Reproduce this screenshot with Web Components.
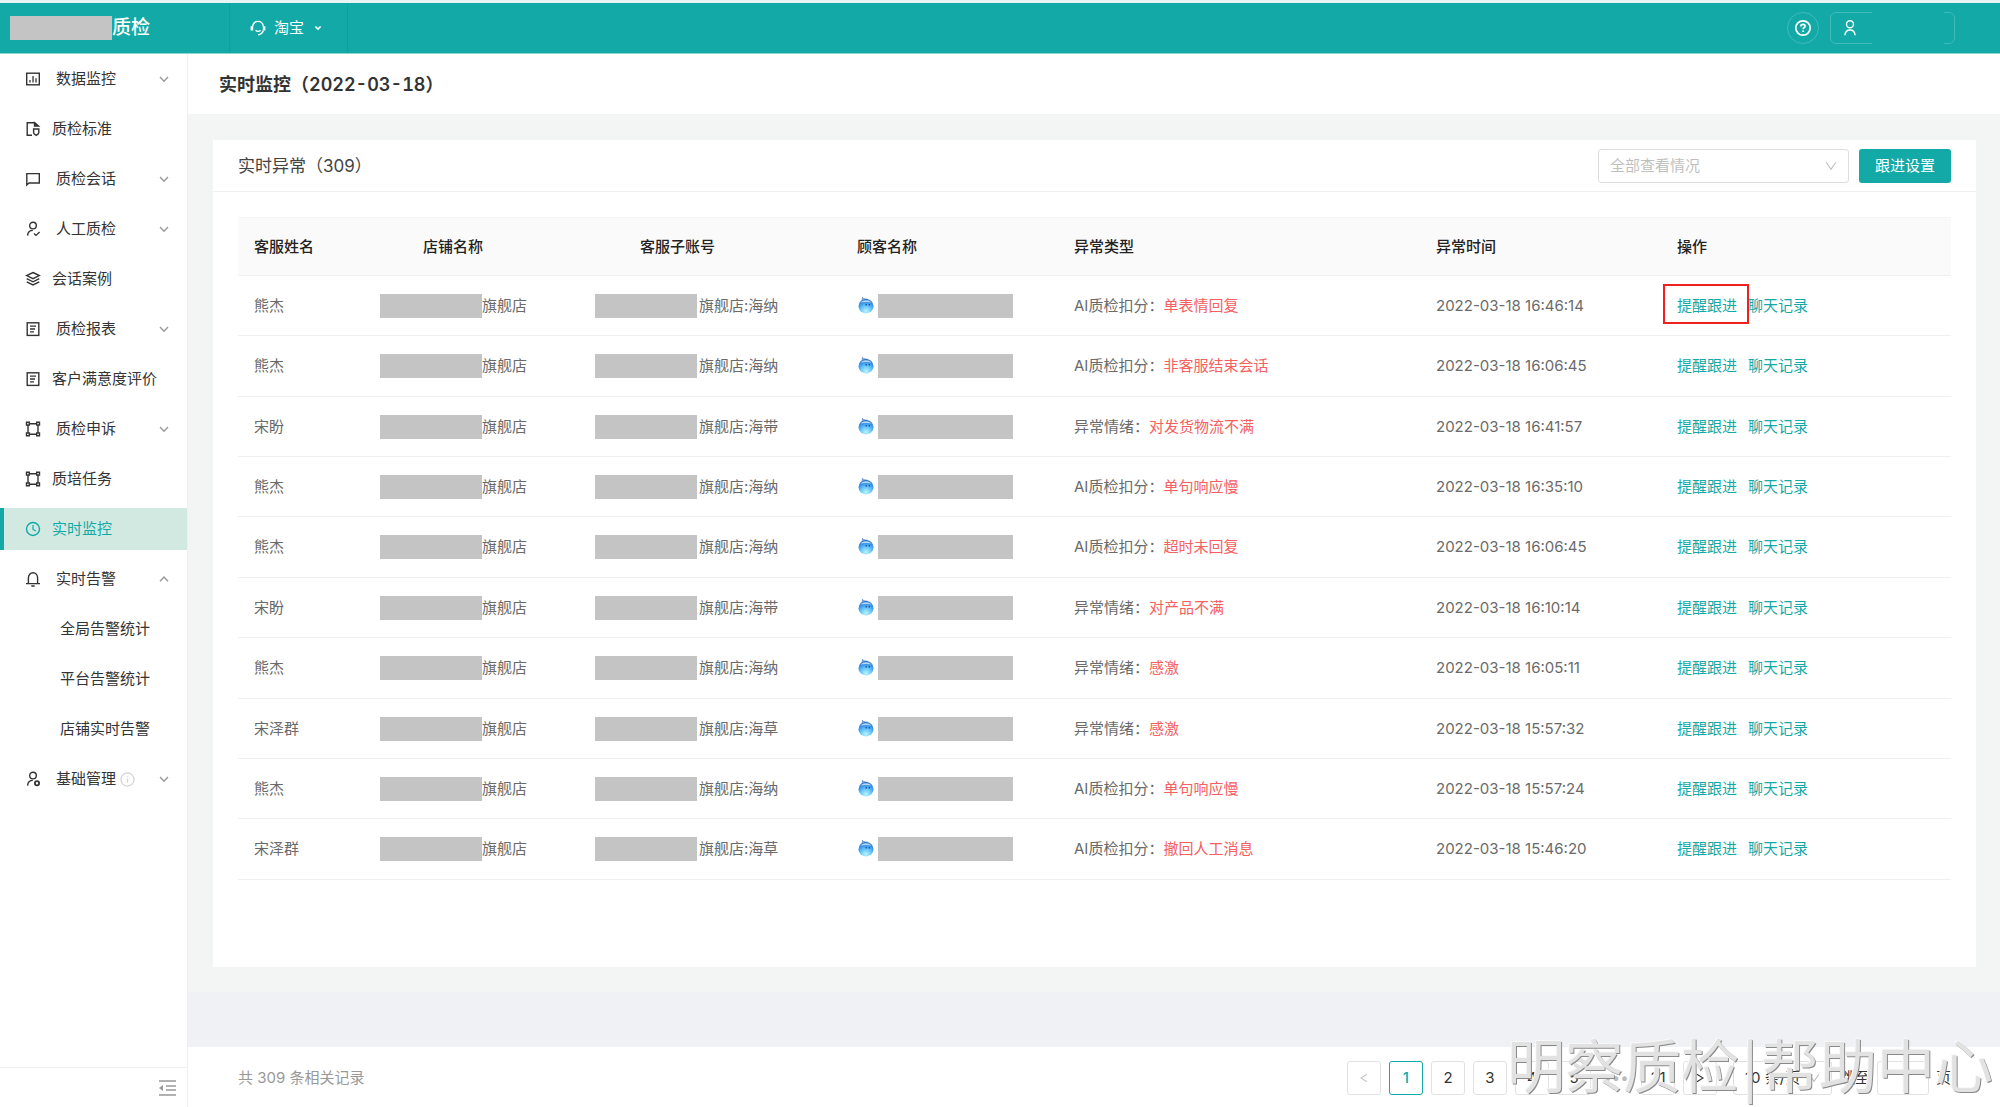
<!DOCTYPE html>
<html lang="zh-CN">
<head>
<meta charset="utf-8">
<title>实时监控</title>
<style>
html, body { margin: 0; }
body {
  --teal: #12a9a7;
  --line: #f0f0f0;
  --mask: #c4c4c4;
  font-family: Inter, "Noto Sans CJK SC", sans-serif;
  font-size: 15px;
  line-height: 22px;
  color: #333;
}
</style>
</head>
<body>
<qc-app></qc-app>
<script>
const ICONS = {
  chart: '<rect x="1.7" y="2.2" width="12.6" height="11.6"/><path d="M5 11.5V9M8 11.5V5M11 11.5V7.2" stroke-width="1.3"/>',
  doc: '<path d="M7 14.2H2.2V1.8H9.5L12.8 5"/><path d="M9.5 1.8V5h4z" fill="currentColor"/><path d="M8.6 8h5.2v3.6c0 1.3-1.3 2.2-2.6 2.8-1.3-.6-2.6-1.5-2.6-2.8z"/>',
  chat: '<path d="M1.8 14V2.6H14.3V12H4z"/>',
  check: '<circle cx="8" cy="4.6" r="3.3"/><path d="M2.6 14.6c.2-3.2 2-5.2 5.2-5.2M9 12.6l2 1.8 3.6-3.3"/>',
  layers: '<path d="M8 1.5 14.3 4.6 8 7.7 1.7 4.6zM1.7 7.7 8 10.8l6.3-3.1M1.7 10.9 8 14l6.3-3.1"/>',
  report: '<rect x="2.2" y="1.8" width="11.6" height="12.6"/><path d="M5 5.2h6M5 8h5M5 10.9h4" stroke-width="1.3"/>',
  frame: '<path d="M3 3.5v9M13 3.5v9M4.5 2.8h7M4.5 13.2h7"/><path d="M1.5 1.3h2.8v2.8H1.5zM11.7 1.3h2.8v2.8h-2.8zM1.5 11.9h2.8v2.8H1.5zM11.7 11.9h2.8v2.8h-2.8z"/>',
  clock: '<circle cx="8" cy="8" r="6.5"/><path d="M8 4v4.400l2.800 1.700" stroke-width="1.200"/>',
  bell: '<path d="M1 12.6h14M3.4 12.6V7c0-3 2-5.2 4.6-5.2S12.600 4 12.600 7v5.600M6.300 15h3.400"/>',
  admin: '<circle cx="8" cy="4.600" r="3.300"/><path d="M2.600 14.600c.200-3.200 2-5.200 5.200-5.200"/><circle cx="12" cy="12.200" r="2.100" stroke-width="1.800"/>',
  fold: '<path d="M0 1h17M7 6h10M7 10h10M0 15h17" stroke-width="1.5" stroke="currentColor"/><path d="M0 8l4-3v6z" fill="currentColor" stroke="none"/>',
  down: '<path d="M4 6l4 4.200L12 6"/>',
  up: '<path d="M4 10.200 8 6l4 4.200"/>',
  left: '<path d="M12 3 4 8l8 5"/>',
  right: '<path d="M4 3l8 5-8 5"/>',
  wide: '<path d="M1.500 3 8 12.500l6.500-9.500"/>',
  headset: '<path d="M2.600 6.500C3 3.600 5.200 1.400 8 1.400s5 2.200 5.400 5.100M13.300 10.500c-.8 2.600-2.400 4-5.200 4.200M5.600 10.200c1.400 1.500 3.600 1.500 4.900 0"/><path d="M1.900 6.200v4.300M14.100 6.200v4.300" stroke-width="2.600"/>',
  caret: '<path d="M4.500 6 8 9.500l3.500-3.500" stroke-width="2.200"/>',
  help: '<circle cx="8" cy="8" r="7.200" stroke-width="1.700"/><path d="M5.900 6.400c0-1.200.9-2 2.100-2s2.100.8 2.100 1.800c0 1.400-2 1.500-2 3M8.100 10.500v1.400" stroke-width="1.700"/>',
  user: '<circle cx="8" cy="4.200" r="3.500"/><path d="M2.900 15.200c.3-3.200 2.200-5.200 5.100-5.200s4.800 2 5.100 5.200"/>',
  info: '<circle cx="8" cy="8" r="7"/><path d="M8 7v4.500M8 4.400v1.200"/>',
  wangwang: '<defs><radialGradient id="b" cx=".5" cy=".85" r=".85"><stop offset="0" stop-color="#b9f4ff"/><stop offset=".4" stop-color="#6cc9fa"/><stop offset=".7" stop-color="#3a97ea"/><stop offset="1" stop-color="#2a6cc6"/></radialGradient></defs><path d="M4.400-.6c.8 1.400 2.600 1.400 5 1.900L4.200 3z" fill="#a9c8ea" stroke="#4377bd" stroke-width=".7"/><ellipse cx="8" cy="8.200" rx="7.500" ry="7.300" fill="url(#b)" stroke="none"/><path d="M2.400 4.600C5 1.300 11 1.300 13.600 4.600 10.600 3.800 5.600 3.800 2.400 4.600z" fill="#b5d7f5" stroke="none"/><path d="M8.200 6v1.600M11.300 6v1.600" stroke="#0f4796" stroke-width="1.200"/>'
};

function define(name, template) {
  customElements.define(name, class extends HTMLElement {
    connectedCallback() {
      if (this.shadowRoot) return;
      const root = this.attachShadow({ mode: 'open' });
      root.innerHTML = typeof template === 'function' ? template(this) : template;
    }
  });
}

define('qc-icon', el => `
<style>
:host { display: inline-block; flex: none; width: 16px; height: 16px; }
svg { display: block; width: 100%; height: 100%; overflow: visible; fill: none; stroke: currentColor; stroke-width: 1.4; }
</style>
<svg viewBox="${el.getAttribute('name') === 'fold' ? '0 0 17 16' : '0 0 16 16'}" aria-hidden="true">${ICONS[el.getAttribute('name')]}</svg>`);

define('qc-mask', `
<style>
:host { display: inline-block; flex: none; width: 102px; height: 24px; background: var(--mask); }
</style>`);

define('qc-header', `
<style>
:host { display: flex; height: 50px; border-top: 3px solid #e9f4f5; border-bottom: 1px solid #8fd4d3; background: var(--teal); color: #fff; }
.brand { display: flex; align-items: center; box-sizing: border-box; width: 229px; padding-left: 10px; font-size: 19px; font-weight: 500; }
.shop { display: flex; align-items: center; gap: 8px; box-sizing: border-box; width: 119px; padding: 0 0 0 20px; border: 0; border-left: 1px solid #0f9f9d; border-right: 1px solid #0f9f9d; background: none; color: inherit; font: inherit; white-space: nowrap; }
.shop qc-icon + span + qc-icon { width: 12px; height: 12px; }
.tools { display: flex; align-items: center; gap: 11px; margin-left: auto; padding-right: 45px; }
.tools button { display: flex; align-items: center; box-sizing: border-box; height: 32px; border: 1px solid #41bab8; background: none; color: #fff; }
.help { width: 32px; padding: 0; justify-content: center; border-radius: 50%; }
.user { width: 125px; padding: 0 11px; border-radius: 6px; position: relative; }
.user::after { content: ""; position: absolute; inset: -2px 10px -2px 41px; background: var(--teal); }
</style>
<div class="brand"><qc-mask></qc-mask><span>质检</span></div>
<button class="shop"><qc-icon name="headset"></qc-icon><span>淘宝</span><qc-icon name="caret"></qc-icon></button>
<div class="tools">
  <button class="help" aria-label="帮助"><qc-icon name="help"></qc-icon></button>
  <button class="user" aria-label="用户"><qc-icon name="user"></qc-icon></button>
</div>`);

define('qc-nav-item', el => `
<style>
:host { display: block; margin-bottom: 8px; color: #333; }
a { display: flex; align-items: center; box-sizing: border-box; height: 42px; padding: 0 15px 0 25px; color: inherit; text-decoration: none; white-space: nowrap; }
.label { margin-left: 11px; }
:host([arrow]) .label { margin-left: 15px; }
:host([child]) a { padding-left: 60px; }
:host([child]) .label { margin-left: 0; }
:host([active]) { color: var(--teal); background: #d2e9e2; }
:host([active]) a { border-left: 4px solid var(--teal); padding-left: 21px; }
.arrow { margin-left: auto; color: #999; }
.info { margin-left: 4px; width: 15px; height: 15px; color: #d5d5d5; }
</style>
<a href="#">
  ${el.hasAttribute('icon') ? `<qc-icon name="${el.getAttribute('icon')}"></qc-icon>` : ''}
  <span class="label"><slot></slot></span>
  ${el.hasAttribute('info') ? '<qc-icon class="info" name="info"></qc-icon>' : ''}
  ${el.hasAttribute('arrow') ? `<qc-icon class="arrow" name="${el.getAttribute('arrow')}"></qc-icon>` : ''}
</a>`);

define('qc-sidebar', `
<style>
:host { display: flex; flex-direction: column; flex: none; width: 187px; border-right: 1px solid var(--line); background: #fff; }
nav { flex: 1; padding-top: 4px; }
footer { display: flex; justify-content: flex-end; align-items: center; box-sizing: border-box; height: 40px; padding-right: 11px; border-top: 1px solid var(--line); }
button { display: flex; border: 0; padding: 0; background: none; color: #999; }
footer qc-icon { width: 17px; }
</style>
<nav>
  <qc-nav-item icon="chart" arrow="down">数据监控</qc-nav-item>
  <qc-nav-item icon="doc">质检标准</qc-nav-item>
  <qc-nav-item icon="chat" arrow="down">质检会话</qc-nav-item>
  <qc-nav-item icon="check" arrow="down">人工质检</qc-nav-item>
  <qc-nav-item icon="layers">会话案例</qc-nav-item>
  <qc-nav-item icon="report" arrow="down">质检报表</qc-nav-item>
  <qc-nav-item icon="report">客户满意度评价</qc-nav-item>
  <qc-nav-item icon="frame" arrow="down">质检申诉</qc-nav-item>
  <qc-nav-item icon="frame">质培任务</qc-nav-item>
  <qc-nav-item icon="clock" active>实时监控</qc-nav-item>
  <qc-nav-item icon="bell" arrow="up">实时告警</qc-nav-item>
  <qc-nav-item child>全局告警统计</qc-nav-item>
  <qc-nav-item child>平台告警统计</qc-nav-item>
  <qc-nav-item child>店铺实时告警</qc-nav-item>
  <qc-nav-item icon="admin" arrow="down" info>基础管理</qc-nav-item>
</nav>
<footer><button aria-label="收起菜单"><qc-icon name="fold"></qc-icon></button></footer>`);

define('qc-select', el => `
<style>
:host { display: inline-grid; align-items: center; height: 34px; }
select { grid-area: 1 / 1; box-sizing: border-box; width: 100%; height: 100%; margin: 0; padding: 0 11px; appearance: none; border: 1px solid #dedede; border-radius: 3px; background: #fff; color: inherit; font: inherit; }
qc-icon { grid-area: 1 / 1; justify-self: end; margin-right: 12px; width: 12px; height: 12px; color: #bbb; pointer-events: none; }
</style>
<select aria-label="${el.getAttribute('label')}"><option>${el.getAttribute('value')}</option></select>
<qc-icon name="wide"></qc-icon>`);

const ROWS = [
  ['熊杰', '海纳', 'AI质检扣分', '单表情回复', '16:46:14'],
  ['熊杰', '海纳', 'AI质检扣分', '非客服结束会话', '16:06:45'],
  ['宋盼', '海带', '异常情绪', '对发货物流不满', '16:41:57'],
  ['熊杰', '海纳', 'AI质检扣分', '单句响应慢', '16:35:10'],
  ['熊杰', '海纳', 'AI质检扣分', '超时未回复', '16:06:45'],
  ['宋盼', '海带', '异常情绪', '对产品不满', '16:10:14'],
  ['熊杰', '海纳', '异常情绪', '感激', '16:05:11'],
  ['宋泽群', '海草', '异常情绪', '感激', '15:57:32'],
  ['熊杰', '海纳', 'AI质检扣分', '单句响应慢', '15:57:24'],
  ['宋泽群', '海草', 'AI质检扣分', '撤回人工消息', '15:46:20']
];

define('qc-table', () => `
<style>
:host { display: block; }
table { width: 100%; table-layout: fixed; border-collapse: separate; border-spacing: 0; }
th, td { box-sizing: border-box; padding: 0 16px; text-align: left; white-space: nowrap; border-bottom: 1px solid var(--line); }
th { height: 59px; border-top: 1px solid #f5f5f5; background: #fafafa; color: #222; font-weight: 500; }
td { height: 60px; color: #6a6a6a; }
tr:nth-child(5n+2) td, tr:nth-child(5n+5) td { height: 61px; }
.c1 { width: 169px } .c2, .c3, .c4 { width: 217px } .c5 { width: 362px } .c6 { width: 241px }
.cell { display: flex; align-items: center; }
.shop { margin-left: -43px; }
.account { gap: 2px; margin-left: -45px; }
.buyer { gap: 4px; padding-left: 1px; }
.buyer qc-mask { width: 135px; }
.bad { color: #f56060; }
.ops { gap: 11px; }
a { color: var(--teal); text-decoration: none; }
.marked { position: relative; }
.marked::after { content: ""; position: absolute; inset: -11px -12px -7px -14px; border: 2px solid #f12020; pointer-events: none; }
</style>
<table>
<colgroup><col class="c1"><col class="c2"><col class="c3"><col class="c4"><col class="c5"><col class="c6"><col></colgroup>
<thead><tr><th>客服姓名</th><th>店铺名称</th><th>客服子账号</th><th>顾客名称</th><th>异常类型</th><th>异常时间</th><th>操作</th></tr></thead>
<tbody>${ROWS.map(([name, account, kind, reason, time], i) => `
<tr>
<td>${name}</td>
<td><div class="cell shop"><qc-mask></qc-mask><span>旗舰店</span></div></td>
<td><div class="cell account"><qc-mask></qc-mask><span>旗舰店:${account}</span></div></td>
<td><div class="cell buyer"><qc-icon name="wangwang"></qc-icon><qc-mask></qc-mask></div></td>
<td>${kind}：<span class="bad">${reason}</span></td>
<td>2022-03-18 ${time}</td>
<td><div class="cell ops"><a href="#"${i === 0 ? ' class="marked"' : ''}>提醒跟进</a><a href="#">聊天记录</a></div></td>
</tr>`).join('')}</tbody>
</table>`);

define('qc-card', `
<style>
:host { display: flex; flex-direction: column; flex: 1; background: #fff; }
header { display: flex; align-items: center; gap: 10px; box-sizing: border-box; height: 52px; padding: 0 25px; border-bottom: 1px solid var(--line); }
h2 { flex: 1; margin: 0; font-size: 17px; font-weight: 400; color: #444; }
section { padding: 25px 25px 0; }
</style>
<header><h2><slot name="title"></slot></h2><slot name="actions"></slot></header>
<section><slot></slot></section>`);

define('qc-button', `
<style>
:host { display: inline-block; }
button { height: 34px; padding: 0 16px; border: 0; border-radius: 3px; background: var(--teal); color: #fff; font: inherit; }
</style>
<button><slot></slot></button>`);

define('qc-pagination', `
<style>
:host { display: flex; align-items: center; box-sizing: border-box; height: 60px; padding: 2px 49px 0 50px; background: #fff; color: #333; }
.total { flex: 1; color: #999; }
.pages { display: flex; align-items: center; gap: 8px; }
button { display: flex; align-items: center; justify-content: center; box-sizing: border-box; width: 34px; height: 34px; padding: 0; border: 1px solid #e2e2e2; border-radius: 3px; background: #fff; color: inherit; font: inherit; }
button qc-icon { width: 12px; height: 12px; }
button:disabled { color: #c4c4c4; }
.on { border-color: var(--teal); color: var(--teal); font-weight: 500; }
.gap { width: 34px; text-align: center; color: #bbb; }
qc-select { width: 99px; margin-left: 8px; }
label { display: flex; align-items: center; gap: 7px; }
input { box-sizing: border-box; width: 52px; height: 34px; border: 1px solid #e2e2e2; border-radius: 3px; font: inherit; }
</style>
<span class="total">共 309 条相关记录</span>
<div class="pages">
  <button disabled aria-label="上一页"><qc-icon name="left"></qc-icon></button>
  <button class="on">1</button><button>2</button><button>3</button><button>4</button><button>5</button>
  <span class="gap">•••</span><button>31</button>
  <button aria-label="下一页"><qc-icon name="right"></qc-icon></button>
  <qc-select label="每页条数" value="10 条/页"></qc-select>
  <label>跳至<input type="text"><span>页</span></label>
</div>`);

define('qc-watermark', `
<style>
:host { position: absolute; right: 7px; bottom: 8px; display: flex; gap: 3px; font-family: "Noto Sans CJK SC", sans-serif; font-size: 58px; line-height: 72px; font-weight: 400; color: #e2e2e2; text-shadow: 1px 1px 0 #8a8a8a, -1px -1px 0 #f8f8f8; white-space: nowrap; pointer-events: none; }
</style>
<slot></slot>`);

define('qc-app', `
<style>
:host { display: flex; flex-direction: column; min-height: 100vh; position: relative; }
.body { display: flex; flex: 1; }
main { display: flex; flex-direction: column; flex: 1; min-width: 0; background: #f0f1f5; }
h1 { display: flex; align-items: center; box-sizing: border-box; height: 60px; margin: 0; padding: 2px 31px 0; background: #fff; color: #333; font-size: 18px; font-weight: 600; font-feature-settings: "tnum"; }
.content { display: flex; flex: 1; margin-bottom: 55px; padding: 26px 24px 25px 25px; background: #f3f5f5; }
.filter { width: 251px; color: #bfbfbf; }
</style>
<qc-header></qc-header>
<div class="body">
  <qc-sidebar></qc-sidebar>
  <main>
    <h1>实时监控（2022-03-18）</h1>
    <div class="content">
      <qc-card>
        <span slot="title">实时异常（309）</span>
        <qc-select slot="actions" class="filter" label="查看情况" value="全部查看情况"></qc-select>
        <qc-button slot="actions">跟进设置</qc-button>
        <qc-table></qc-table>
      </qc-card>
    </div>
    <qc-pagination></qc-pagination>
  </main>
</div>
<qc-watermark><span>明察质检</span><span>|</span><span>帮助中心</span></qc-watermark>`);
</script>
</body>
</html>
